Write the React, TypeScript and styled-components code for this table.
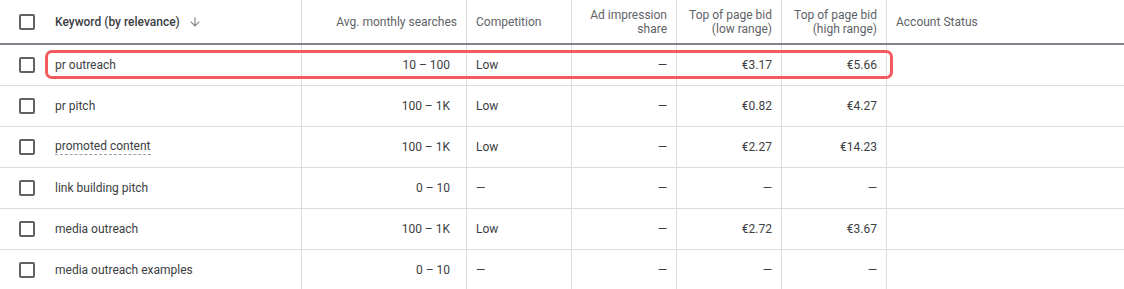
import React from "react";
import styled, { createGlobalStyle } from "styled-components";

const GlobalStyle = createGlobalStyle`
  body {
    margin: 0;
    background: #fff;
    font-family: Roboto, "Liberation Sans", Arial, sans-serif;
    -webkit-font-smoothing: antialiased;
  }
`;

const COLS = "302px 165px 105px 105px 105px 105px 1fr";

const Table = styled.div`
  width: 1124px;
  overflow: hidden;
`;

const HeaderRow = styled.div`
  display: grid;
  grid-template-columns: ${COLS};
  height: 43px;
  border-bottom: 2px solid #80868b;
`;

const Row = styled.div`
  position: relative;
  display: grid;
  grid-template-columns: ${COLS};
  height: 40px;
  border-bottom: 1px solid #dadce0;
`;

const Cell = styled.div<{ $align?: "left" | "right"; $pr?: number; $last?: boolean }>`
  display: flex;
  align-items: center;
  justify-content: ${(p) => (p.$align === "right" ? "flex-end" : "flex-start")};
  text-align: ${(p) => p.$align ?? "left"};
  padding: 0 ${(p) => p.$pr ?? 9}px 0 9px;
  border-right: ${(p) => (p.$last ? "none" : "1px solid #dadce0")};
  font-size: 12px;
  line-height: 14px;
  color: #3c4043;
  white-space: nowrap;
`;

const HeadCell = styled(Cell)`
  color: #5f6368;
`;

const KeywordCell = styled.div`
  display: flex;
  align-items: center;
  gap: 20px;
  padding-left: 19px;
  border-right: 1px solid #dadce0;
  font-size: 12px;
  color: #3c4043;
`;

const Checkbox = styled.span`
  width: 16px;
  height: 16px;
  box-sizing: border-box;
  border: 2px solid #5f6368;
  border-radius: 2px;
  flex: none;
`;

const HeadTitle = styled.span`
  display: flex;
  align-items: center;
  gap: 8px;
  font-weight: 500;
  color: #3c4043;
`;

const SortIcon = styled.svg`
  width: 14px;
  height: 14px;
  fill: #80868b;
`;

const Dashed = styled.span`
  border-bottom: 1px dashed #9aa0a6;
  padding-bottom: 1px;
`;

const Highlight = styled.div`
  position: absolute;
  left: 45px;
  top: 5px;
  width: 848px;
  height: 29px;
  box-sizing: border-box;
  border: 3px solid #f35a5f;
  border-radius: 7px;
  pointer-events: none;
`;

type Kw = {
  name: string;
  searches: string;
  comp: string;
  impr: string;
  low: string;
  high: string;
  dashed?: boolean;
  marked?: boolean;
};

const rows: Kw[] = [
  { name: "pr outreach", searches: "10 – 100", comp: "Low", impr: "—", low: "€3.17", high: "€5.66", marked: true },
  { name: "pr pitch", searches: "100 – 1K", comp: "Low", impr: "—", low: "€0.82", high: "€4.27" },
  { name: "promoted content", searches: "100 – 1K", comp: "Low", impr: "—", low: "€2.27", high: "€14.23", dashed: true },
  { name: "link building pitch", searches: "0 – 10", comp: "—", impr: "—", low: "—", high: "—" },
  { name: "media outreach", searches: "100 – 1K", comp: "Low", impr: "—", low: "€2.72", high: "€3.67" },
  { name: "media outreach examples", searches: "0 – 10", comp: "—", impr: "—", low: "—", high: "—" },
];

export default function App() {
  return (
    <>
      <GlobalStyle />
      <Table>
        <HeaderRow>
          <KeywordCell>
            <Checkbox />
            <HeadTitle>
              Keyword (by relevance)
              <SortIcon viewBox="0 0 24 24">
                <path d="M20 12l-1.41-1.41L13 16.17V4h-2v12.17l-5.58-5.59L4 12l8 8 8-8z" />
              </SortIcon>
            </HeadTitle>
          </KeywordCell>
          <HeadCell $align="right">Avg. monthly searches</HeadCell>
          <HeadCell>Competition</HeadCell>
          <HeadCell $align="right">
            Ad impression
            <br />
            share
          </HeadCell>
          <HeadCell $align="right">
            Top of page bid
            <br />
            (low range)
          </HeadCell>
          <HeadCell $align="right">
            Top of page bid
            <br />
            (high range)
          </HeadCell>
          <HeadCell $last>Account Status</HeadCell>
        </HeaderRow>
        {rows.map((r) => (
          <Row key={r.name}>
            <KeywordCell>
              <Checkbox />
              {r.dashed ? <Dashed>{r.name}</Dashed> : <span>{r.name}</span>}
            </KeywordCell>
            <Cell $align="right" $pr={16}>{r.searches}</Cell>
            <Cell>{r.comp}</Cell>
            <Cell $align="right">{r.impr}</Cell>
            <Cell $align="right">{r.low}</Cell>
            <Cell $align="right">{r.high}</Cell>
            <Cell $last />
            {r.marked && <Highlight />}
          </Row>
        ))}
      </Table>
    </>
  );
}
